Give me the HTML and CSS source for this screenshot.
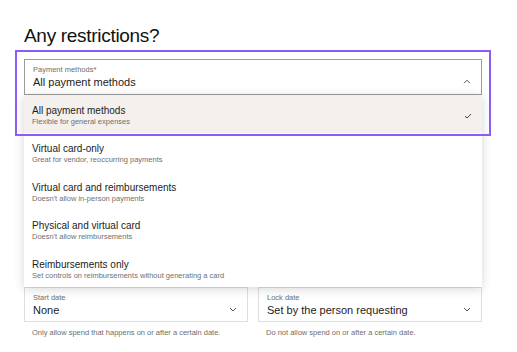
FILE: index.html
```html
<!DOCTYPE html>
<html lang="en">
<head>
    <meta charset="UTF-8">
    <meta name="viewport" content="width=device-width, initial-scale=1.0">
    <title>Any restrictions?</title>
    <link rel="stylesheet" href="styles.css">
</head>
<body>
    <div class="page">
        <h1>Any restrictions?</h1>

        <div class="select-wrap">
            <div class="select">
                <div class="select-text">
                    <span class="field-label">Payment methods*</span>
                    <span class="field-value">All payment methods</span>
                </div>
                <svg class="chev" width="8" height="5" viewBox="0 0 8 5"><path d="M1 4.2 4 1.2 7 4.2" fill="none" stroke="#555" stroke-width="1"/></svg>
            </div>

            <ul class="menu">
                <li class="option selected">
                    <div>
                        <div class="opt-title">All payment methods</div>
                        <div class="opt-sub">Flexible for general expenses</div>
                    </div>
                    <svg class="check" width="8" height="6" viewBox="0 0 8 6"><path d="M1 3.2 3 5 7 1" fill="none" stroke="#444" stroke-width="1"/></svg>
                </li>
                <li class="option">
                    <div>
                        <div class="opt-title">Virtual card-only</div>
                        <div class="opt-sub">Great for vendor, reoccurring payments</div>
                    </div>
                </li>
                <li class="option">
                    <div>
                        <div class="opt-title">Virtual card and reimbursements</div>
                        <div class="opt-sub">Doesn't allow in-person payments</div>
                    </div>
                </li>
                <li class="option">
                    <div>
                        <div class="opt-title">Physical and virtual card</div>
                        <div class="opt-sub">Doesn't allow reimbursements</div>
                    </div>
                </li>
                <li class="option">
                    <div>
                        <div class="opt-title">Reimbursements only</div>
                        <div class="opt-sub">Set controls on reimbursements without generating a card</div>
                    </div>
                </li>
            </ul>

            <div class="focus-ring"></div>
        </div>

        <div class="date-row">
            <div class="date-col">
                <div class="date-box">
                    <div class="select-text">
                        <span class="field-label">Start date</span>
                        <span class="field-value">None</span>
                    </div>
                    <svg class="chev" width="8" height="5" viewBox="0 0 8 5"><path d="M1 1 4 4 7 1" fill="none" stroke="#555" stroke-width="1"/></svg>
                </div>
                <p class="helper">Only allow spend that happens on or after a certain date.</p>
            </div>
            <div class="date-col">
                <div class="date-box">
                    <div class="select-text">
                        <span class="field-label">Lock date</span>
                        <span class="field-value">Set by the person requesting</span>
                    </div>
                    <svg class="chev" width="8" height="5" viewBox="0 0 8 5"><path d="M1 1 4 4 7 1" fill="none" stroke="#555" stroke-width="1"/></svg>
                </div>
                <p class="helper">Do not allow spend on or after a certain date.</p>
            </div>
        </div>
    </div>
</body>
</html>
```

FILE: styles.css
```css
* {
    box-sizing: border-box;
}
body {
    margin: 0;
    font-family: 'Liberation Sans', Arial, sans-serif;
    background-color: white;
    color: #1c1c1c;
}
.page {
    width: 458px;
    margin-left: 24px;
    padding-top: 25px;
}
h1 {
    margin: 0 0 12px;
    font-size: 19px;
    font-weight: normal;
    letter-spacing: -0.3px;
    line-height: 22px;
    color: #111;
}
.select-wrap {
    position: relative;
}
.select {
    height: 36px;
    border: 1px solid #9b9b9b;
    display: flex;
    align-items: center;
    justify-content: space-between;
    padding: 0 10px 0 8px;
}
.select-text {
    display: flex;
    flex-direction: column;
}
.field-label {
    font-size: 7.5px;
    line-height: 10px;
    color: #6e6e6e;
}
.field-value {
    font-size: 11px;
    line-height: 15px;
    color: #1c1c1c;
}
.chev {
    display: block;
    margin-top: 8px;
}
.menu {
    position: absolute;
    top: 36px;
    left: 0;
    right: 0;
    margin: 0;
    padding: 0;
    list-style: none;
    background-color: white;
    box-shadow: 0 2px 10px rgba(0,0,0,0.16);
    z-index: 2;
}
.option {
    height: 38.4px;
    padding: 10px 10px 0 8px;
    display: flex;
    justify-content: space-between;
    align-items: flex-start;
}
.option.selected {
    background-color: #f3f0ed;
}
.opt-title {
    font-size: 10px;
    line-height: 12px;
    color: #1c1c1c;
}
.opt-sub {
    font-size: 7.5px;
    line-height: 10px;
    color: #707070;
}
.check {
    display: block;
    margin-top: 8px;
}
.focus-ring {
    position: absolute;
    top: -9px;
    left: -9px;
    right: -9px;
    height: 86px;
    border: 2px solid #8b5cf6;
    z-index: 3;
}
.date-row {
    display: grid;
    grid-template-columns: 1fr 1fr;
    gap: 10px;
    margin-top: 192px;
}
.date-box {
    height: 35px;
    border: 1px solid #dedede;
    display: flex;
    align-items: center;
    justify-content: space-between;
    padding: 2px 10px 0 8px;
}
.helper {
    margin: 6px 0 0;
    padding-left: 8px;
    font-size: 7.5px;
    line-height: 10px;
    color: #6e6e6e;
}
```
